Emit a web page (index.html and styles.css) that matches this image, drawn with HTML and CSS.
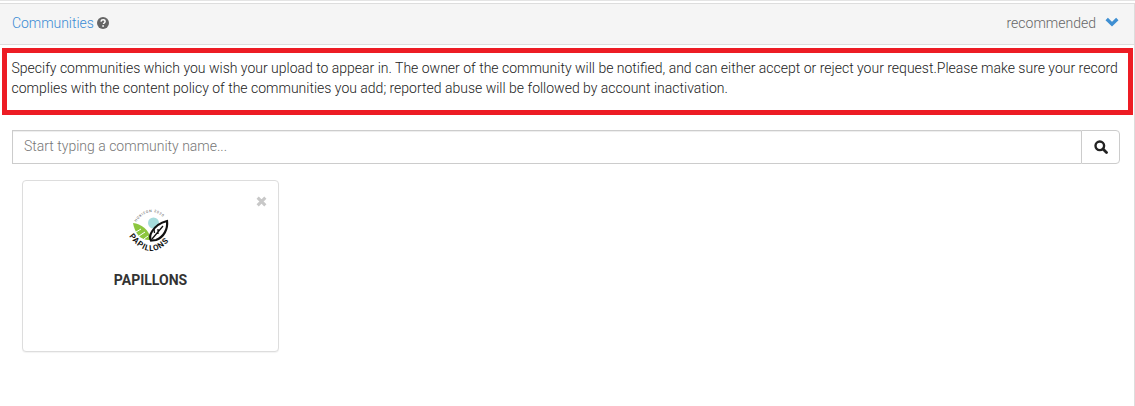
FILE: index.html
```html
<!DOCTYPE html>
<html lang="en">
<head>
<meta charset="utf-8">
<title>Communities</title>
<link rel="stylesheet" href="styles.css">
</head>
<body>
<div class="panel">
  <div class="panel-head">
    <div class="title">
      <span class="title-text">Communities</span>
      <svg class="help" viewBox="0 0 12 12" aria-hidden="true"><circle cx="6" cy="6" r="6" fill="#666"/><path d="M4 4.600c.1-1.200 1-1.800 2.100-1.800s2 .6 2 1.700c0 .8-.5 1.100-1 1.500-.4.300-.6.500-.6 1" fill="none" stroke="#fff" stroke-width="1.500"/><rect x="5.300" y="8.200" width="1.600" height="1.600" fill="#fff"/></svg>
    </div>
    <div class="rec">
      <span>recommended</span>
      <svg class="chev" viewBox="0 0 14 10" aria-hidden="true"><path d="M1.700 2 7 7.200 12.300 2" fill="none" stroke="#3f8fd2" stroke-width="3.400"/></svg>
    </div>
  </div>
  <div class="notice">Specify communities which you wish your upload to appear in. The owner of the community will be notified, and can either accept or reject your request.Please make sure your record complies with the content policy of the communities you add; reported abuse will be followed by account inactivation.</div>
  <div class="search">
    <input class="search-input" type="text" placeholder="Start typing a community name...">
    <button class="search-btn" type="button" aria-label="Search">
      <svg viewBox="0 0 14 14" width="14" height="14" aria-hidden="true"><circle cx="5.800" cy="5.800" r="4.300" fill="none" stroke="#222" stroke-width="2.400"/><path d="M9 9l3.500 3.500" stroke="#222" stroke-width="2.800" stroke-linecap="round"/></svg>
    </button>
  </div>
  <div class="cards">
    <div class="card">
      <svg class="close" viewBox="0 0 10 10" aria-hidden="true"><path d="M1.500 1.500l7 7M8.500 1.500l-7 7" stroke="#c8c8c8" stroke-width="2.800"/></svg>
      <svg class="logo" viewBox="0 0 50 50" aria-hidden="true">
        <defs>
          <path id="arcTop" d="M10 14Q25 -5 40 12"/>
          <path id="arcBot" d="M3 28Q25 58 47 28"/>
        </defs>
        <text class="logo-small"><textPath href="#arcTop">HORIZON 2020</textPath></text>
        <circle cx="27.500" cy="15" r="5.500" fill="#a5dcdc"/>
        <path d="M7 15c8 1 16 6 18 17C15 33 9 26 7 15z" fill="#8cc63f"/>
        <path d="M10 24l5-3M13 28l6-4M18 31l4-3" stroke="#fff" stroke-width="1"/>
        <path d="M41 13c1 8-3 16-11 19l-5 .500c-1.500-3-1-6 1-9 3-5 9-9 15-10.500z" fill="#fff" stroke="#111" stroke-width="2.200"/>
        <path d="M37 18L26 31M32 21v5M28.500 25l-.5-4" stroke="#111" stroke-width="1.300" fill="none"/>
        <text class="logo-name"><textPath href="#arcBot">PAPILLONS</textPath></text>
      </svg>
      <div class="card-name">PAPILLONS</div>
    </div>
  </div>
</div>
</body>
</html>
```

FILE: styles.css
```css
* { box-sizing: border-box; }
html, body { margin: 0; padding: 0; background: #fff; }
body {
  font-family: Roboto, "Liberation Sans", sans-serif;
  font-size: 14px;
  font-weight: 300;
  color: #222;
  height: 406px;
  overflow: hidden;
  border-top: 1px solid #e4e4e4;
  padding-top: 2px;
}
.panel { border-right: 1px solid #ddd; height: 100%; }
.panel-head {
  display: flex;
  justify-content: space-between;
  align-items: center;
  height: 42px;
  background: #f5f5f5;
  border-top: 1px solid #ddd;
  border-bottom: 1px solid #ddd;
  padding: 0 15px 2px 12px;
}
.title { display: flex; align-items: center; gap: 3px; }
.title-text { color: #3a8bd4; letter-spacing: -.05px; }
.help { width: 12px; height: 12px; }
.rec { display: flex; align-items: center; gap: 9px; color: #666; }
.chev { width: 14px; height: 10px; margin-top: -3px; }
.notice {
  margin: 3px 1px 0 2px;
  height: 67px;
  border: 5px solid #ed1c24;
  padding: 5px 4px 0 4.500px;
  line-height: 20px;
}
.search { display: flex; margin: 15px 14px 0 12px; height: 34px; }
.search-input {
  flex: 1;
  min-width: 0;
  border: 1px solid #ccc;
  border-right: 0;
  padding: 0 11px 2px;
  font: inherit;
  color: #333;
  outline: 0;
  box-shadow: inset 0 1px 1px rgba(0,0,0,.075);
}
.search-input::placeholder { color: #777; opacity: 1; }
.search-btn {
  width: 39px;
  padding: 0;
  display: flex;
  align-items: center;
  justify-content: center;
  background: #fff;
  border: 1px solid #ccc;
  border-radius: 0 4px 4px 0;
}
.cards { padding: 16px 0 0 22px; }
.card {
  position: relative;
  width: 257px;
  height: 172px;
  background: #fff;
  border: 1px solid #ddd;
  border-radius: 4px;
  box-shadow: 0 1px 1px rgba(0,0,0,.05);
  display: flex;
  flex-direction: column;
  align-items: center;
  padding-top: 27px;
}
.close { position: absolute; top: 15px; right: 11px; width: 11px; height: 11px; }
.logo { width: 50px; height: 50px; display: block; }
.logo-small { font: 400 3.500px Roboto, sans-serif; letter-spacing: .7px; fill: #444; }
.logo-name { font: 700 8px Roboto, sans-serif; letter-spacing: .8px; fill: #111; }
.card-name { margin-top: 12px; font-weight: 700; color: #333; line-height: 20px; }
```
